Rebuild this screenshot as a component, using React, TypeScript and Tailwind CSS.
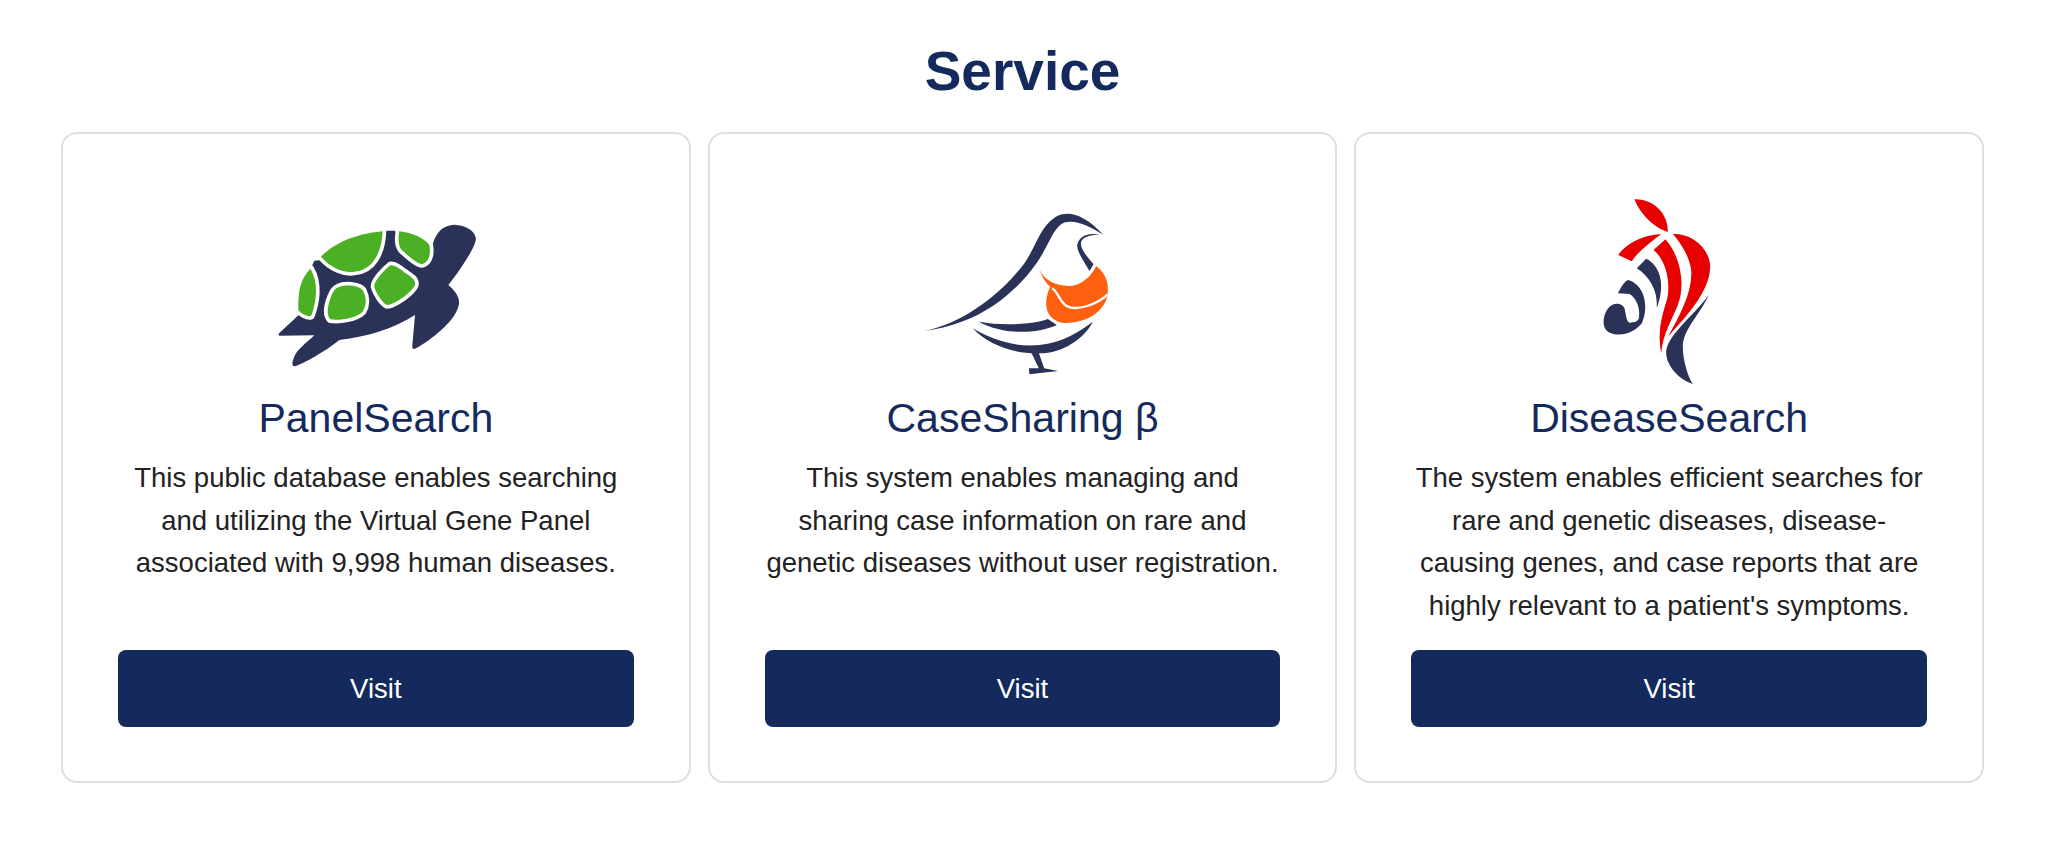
import type { ReactNode } from "react";

const NAVY = "#2a3357";

function TurtleLogo() {
  const patch = { fill: "#4bb023", stroke: "#fff", strokeWidth: 22, paintOrder: "stroke" as const, strokeLinejoin: "round" as const };
  return (
    <svg viewBox="0 0 750 600" className="h-[200px] w-[250px] shrink-0">
      <path
        fill={NAVY}
        d="M82 432 L150 368 L150 300 L190 212 L300 200 L405 122 L432 122 L470 200 L530 215 L546 160 C556 125 578 105 610 104 C650 105 682 130 673 155 C665 185 620 250 592 285 C615 305 630 325 622 350 C610 395 540 450 495 475 C485 480 483 475 484 465 L492 375 C430 415 350 440 265 450 C240 470 190 505 135 528 C122 532 122 520 128 505 C135 480 165 460 190 436 L85 437 Z"
      />
      <path {...patch} d="M395 124 C330 130 260 150 210 200 C240 235 280 250 310 245 C365 240 392 190 395 124 Z" />
      <path {...patch} d="M178 236 C150 265 140 300 142 360 C150 372 170 380 180 378 C195 340 205 280 178 236 Z" />
      <path {...patch} d="M445 124 C485 128 520 145 535 165 C540 190 535 215 515 222 C500 225 470 195 452 180 C440 165 442 140 445 124 Z" />
      <path {...patch} d="M262 292 C280 283 320 285 335 300 C345 320 350 340 335 365 C315 385 265 392 238 388 C225 375 230 345 240 320 C245 305 252 296 262 292 Z" />
      <path {...patch} d="M418 226 C430 224 445 235 462 248 C480 260 495 268 492 285 C485 305 430 345 408 345 C395 340 375 310 370 290 C368 275 400 240 418 226 Z" />
    </svg>
  );
}

function BirdLogo() {
  return (
    <svg viewBox="-7.5 -15 750 600" className="h-[200px] w-[250px] shrink-0">
      <g fill={NAVY}>
        <path d="M75 408 C190 385 305 298 376 203 C412 150 422 95 468 66 C505 44 555 58 612 120 C570 94 530 74 497 82 C468 92 458 125 428 178 C382 258 292 342 190 379 C150 394 110 404 75 408 Z" />
        <path d="M600 120 C570 112 540 120 533 150 C533 170 550 195 570 228 L582 208 C560 180 540 160 545 140 C550 125 575 118 600 120 Z" />
        <path d="M238 380 C300 392 400 390 445 372 L472 390 C400 422 300 415 238 380 Z" />
        <path d="M220 400 C270 430 340 458 420 450 C490 442 540 410 580 380 C555 430 490 475 420 475 C340 478 260 445 220 400 Z" />
        <path d="M396 474 L418 474 L434 520 L476 528 L390 538 L388 520 L418 520 Z" />
      </g>
      <path
        fill="#ff6010"
        d="M420 222 C430 250 460 272 510 273 C545 272 575 245 590 213 C620 235 632 270 622 310 C605 360 550 385 495 384 C460 382 438 355 440 320 C441 300 448 285 452 275 C435 260 425 240 420 222 Z"
      />
      <path fill="none" stroke="#fff" strokeWidth="7" d="M458 280 C475 290 480 320 500 332 C530 350 590 330 625 298" />
    </svg>
  );
}

function DiseaseLogo() {
  return (
    <svg viewBox="-106.5 0 750 600" className="h-[200px] w-[250px] shrink-0">
      <g fill="#e60000">
        <path d="M165 28 C210 25 265 60 265 126 C225 115 180 70 165 28 Z" />
        <path d="M245 132 C190 135 140 160 116 195 L157 214 C175 185 210 160 245 132 Z" />
        <path d="M258 148 L222 180 C260 210 275 280 262 330 C250 370 232 420 245 490 C250 430 280 385 295 345 C320 280 300 195 258 148 Z" />
        <path d="M280 132 C330 130 385 165 392 225 C395 300 320 380 265 440 C305 370 340 300 335 240 C330 200 305 160 280 132 Z" />
      </g>
      <g fill={NAVY}>
        <path d="M200 206 C240 225 260 280 232 354 C235 300 210 260 172 235 Z" />
        <path d="M145 270 C190 280 212 345 187 400 C165 428 120 445 85 425 C65 410 70 370 90 350 C105 335 130 340 135 355 C140 375 140 395 150 398 C165 398 175 395 178 385 C185 350 165 320 150 312 L115 310 C125 290 135 275 145 270 Z" />
        <path d="M388 315 C360 375 310 420 310 470 C310 510 325 560 340 582 C300 570 262 530 260 490 C258 440 340 380 388 315 Z" />
      </g>
    </svg>
  );
}

function ServiceCard({ logo, title, text }: { logo: ReactNode; title: string; text: string }) {
  return (
    <div className="flex h-[651px] flex-col items-center rounded-[16px] border-2 border-[#dedede] px-[55px] pt-[56px] pb-[54px]">
      {logo}
      <h3 className="mt-[4px] text-[41px] leading-[48px] text-[#142a5c]">{title}</h3>
      <p className="mt-[15px] text-center text-[27.5px] leading-[42.5px] text-[#222222]">{text}</p>
      <a className="mt-auto flex h-[77px] w-full items-center justify-center rounded-[8px] bg-[#142a5c] text-[27.5px] text-white">
        Visit
      </a>
    </div>
  );
}

export default function App() {
  return (
    <div className="min-h-[842px] bg-white pr-[64px] pl-[61px] font-['Liberation_Sans',sans-serif]">
      <h2 className="pt-[40px] pb-[30px] text-center text-[55px] leading-[62px] font-bold text-[#142a5c]">Service</h2>
      <div className="grid grid-cols-3 gap-[17px]">
        <ServiceCard
          logo={<TurtleLogo />}
          title="PanelSearch"
          text="This public database enables searching and utilizing the Virtual Gene Panel associated with 9,998 human diseases."
        />
        <ServiceCard
          logo={<BirdLogo />}
          title="CaseSharing β"
          text="This system enables managing and sharing case information on rare and genetic diseases without user registration."
        />
        <ServiceCard
          logo={<DiseaseLogo />}
          title="DiseaseSearch"
          text="The system enables efficient searches for rare and genetic diseases, disease-causing genes, and case reports that are highly relevant to a patient's symptoms."
        />
      </div>
    </div>
  );
}
